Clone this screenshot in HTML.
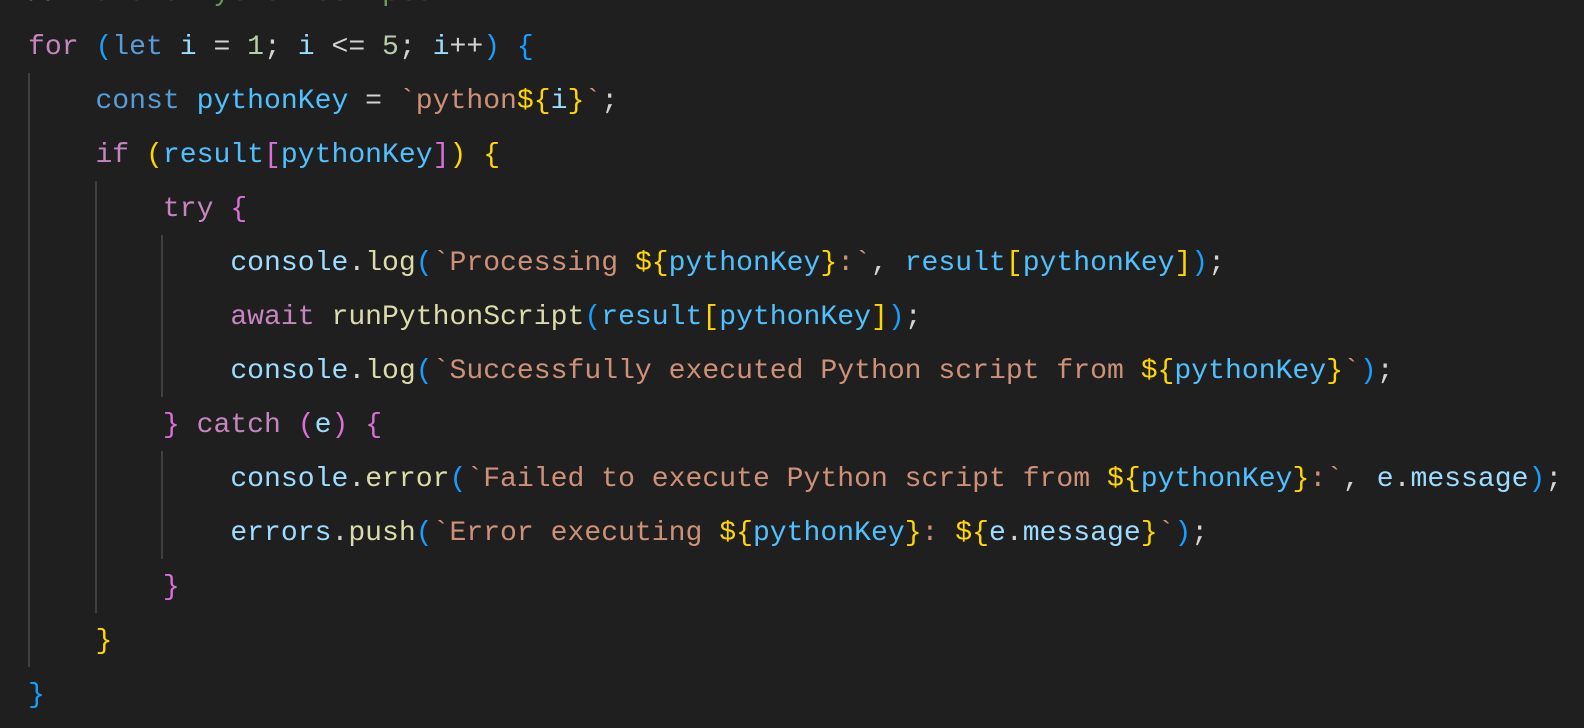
<!DOCTYPE html>
<html><head><meta charset="utf-8"><style>
html,body{margin:0;padding:0;background:#1f1f1f;width:1584px;height:728px;overflow:hidden}
pre{position:absolute;left:28px;top:-33px;margin:0;font-family:"Liberation Mono",monospace;font-size:28.1px;line-height:54px;color:#d4d4d4;white-space:pre;transform:scaleY(1.08);transform-origin:0 0}
.g{position:absolute;width:2px;background:#404040}
.c{color:#6a9955}.k{color:#c586c0}.s{color:#569cd6}.v{color:#9cdcfe}.cn{color:#4fc1ff}.n{color:#b5cea8}
.st{color:#ce9178}.f{color:#dcdcaa}.y{color:#ffd700}.p{color:#da70d6}.b{color:#179fff}
</style></head><body>
<div class="g" style="left:28px;top:73px;height:594px"></div>
<div class="g" style="left:95px;top:181px;height:432px"></div>
<div class="g" style="left:161px;top:235px;height:162px"></div>
<div class="g" style="left:161px;top:451px;height:108px"></div>
<pre style="transform:none"><span class="c">// Handle Python scripts</span>
<span class="k">for</span> <span class="b">(</span><span class="s">let</span> <span class="v">i</span> = <span class="n">1</span>; <span class="v">i</span> &lt;= <span class="n">5</span>; <span class="v">i</span>++<span class="b">)</span> <span class="b">{</span>
    <span class="s">const</span> <span class="cn">pythonKey</span> = <span class="st">`python</span><span class="y">${</span><span class="v">i</span><span class="y">}</span><span class="st">`</span>;
    <span class="k">if</span> <span class="y">(</span><span class="cn">result</span><span class="p">[</span><span class="cn">pythonKey</span><span class="p">]</span><span class="y">)</span> <span class="y">{</span>
        <span class="k">try</span> <span class="p">{</span>
            <span class="v">console</span>.<span class="f">log</span><span class="b">(</span><span class="st">`Processing </span><span class="y">${</span><span class="cn">pythonKey</span><span class="y">}</span><span class="st">:`</span>, <span class="cn">result</span><span class="y">[</span><span class="cn">pythonKey</span><span class="y">]</span><span class="b">)</span>;
            <span class="k">await</span> <span class="f">runPythonScript</span><span class="b">(</span><span class="cn">result</span><span class="y">[</span><span class="cn">pythonKey</span><span class="y">]</span><span class="b">)</span>;
            <span class="v">console</span>.<span class="f">log</span><span class="b">(</span><span class="st">`Successfully executed Python script from </span><span class="y">${</span><span class="cn">pythonKey</span><span class="y">}</span><span class="st">`</span><span class="b">)</span>;
        <span class="p">}</span> <span class="k">catch</span> <span class="p">(</span><span class="v">e</span><span class="p">)</span> <span class="p">{</span>
            <span class="v">console</span>.<span class="f">error</span><span class="b">(</span><span class="st">`Failed to execute Python script from </span><span class="y">${</span><span class="cn">pythonKey</span><span class="y">}</span><span class="st">:`</span>, <span class="v">e</span>.<span class="v">message</span><span class="b">)</span>;
            <span class="v">errors</span>.<span class="f">push</span><span class="b">(</span><span class="st">`Error executing </span><span class="y">${</span><span class="cn">pythonKey</span><span class="y">}</span><span class="st">: </span><span class="y">${</span><span class="v">e</span>.<span class="v">message</span><span class="y">}</span><span class="st">`</span><span class="b">)</span>;
        <span class="p">}</span>
    <span class="y">}</span>
<span class="b">}</span></pre>
</body></html>
